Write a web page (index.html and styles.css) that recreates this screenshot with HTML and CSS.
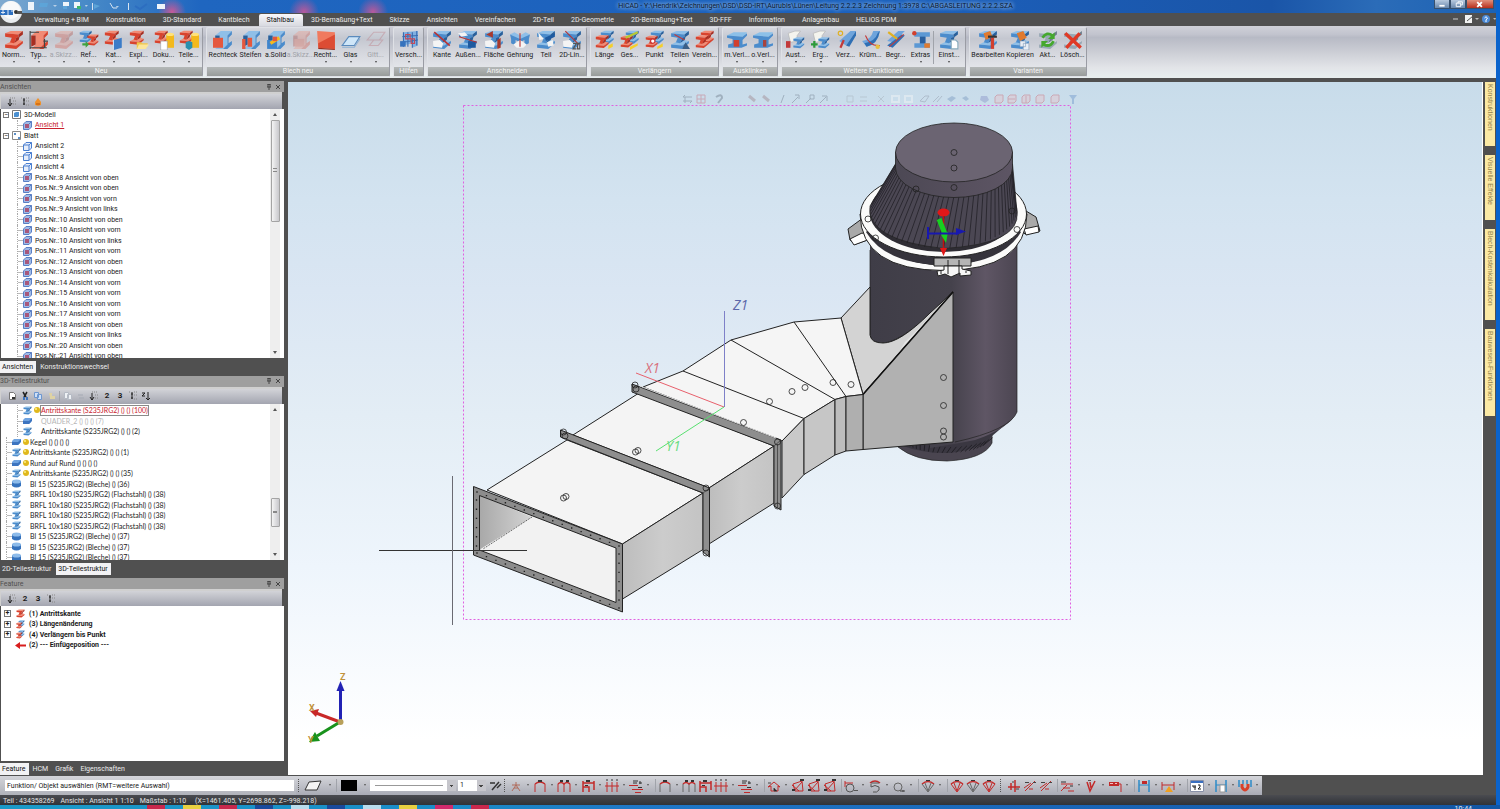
FILE: index.html
```html
<!DOCTYPE html>
<html lang="de">
<head>
    <meta charset="UTF-8">
    <meta name="viewport" content="width=device-width, initial-scale=1.0">
    <title>HiCAD</title>
    <link rel="stylesheet" href="styles.css">
</head>
<body>

<!-- shared icon shapes -->
<svg class="defs" width="0" height="0" aria-hidden="true">
    <symbol id="beam" viewBox="0 0 18 18">
        <path fill="var(--a)" d="M1 3 6 1H17L13 4z"/>
        <path fill="var(--b)" d="M1 3 13 4V7L11 7 9 13 5 12 7 7 1 6z"/>
        <path fill="var(--c)" d="M13 4 17 1V4L13 7zM11 7 14 6 13 10 9 13z"/>
        <path fill="var(--a)" d="M1 13 5 11 9 12 13 9 17 10 11 14z"/>
        <path fill="var(--b)" d="M1 13 11 14V17L1 16zM11 14 17 10V12L11 17z"/>
    </symbol>
    <symbol id="sheet" viewBox="0 0 18 18">
        <path fill="var(--a)" d="M2 5 7 1H17L13 5V13L9 17H2L6 13V5z"/>
        <path fill="var(--b)" d="M13 5 17 1V4L14 7V12L17 10V13L13 17H9L13 13z"/>
        <path fill="var(--c)" d="M2 5H6V13L2 15z"/>
    </symbol>
    <symbol id="cube" viewBox="0 0 9 9">
        <path fill="#e6eefb" stroke="#4a7fd0" d="M.5 3 3 .5H8.500V6L6 8.500H.5zM.5 3H6V8.500M6 3 8.500.5"/>
    </symbol>
    <symbol id="cubered" viewBox="0 0 9 9">
        <path fill="#9fbbe8" stroke="#5a7fc4" d="M.5 3 3 .5H8.500V6L6 8.500H.5zM6 3 8.500.5"/>
        <path fill="#a8587c" d="M2 3h4v4H2z"/>
    </symbol>
    <symbol id="plate" viewBox="0 0 9 9">
        <path fill="#6fa3e0" d="M0 4 2 2h7L8 6 6 8H0z"/><path fill="#3c74c0" d="M0 5h6l3-3v3L6 8H0z"/>
    </symbol>
    <symbol id="disc" viewBox="0 0 9 9">
        <path fill="#3572bd" d="M0 2h9v5Q4.500 10 0 7z"/><ellipse fill="#8dbbea" cx="4.500" cy="2.500" rx="4.500" ry="2"/>
    </symbol>
    <symbol id="ball" viewBox="0 0 6 6"><circle fill="#e0b81c" cx="3" cy="3" r="3"/><circle fill="#fff08a" cx="2" cy="2" r="1"/></symbol>
    <symbol id="tree-a" viewBox="0 0 10 10"><path stroke="#222" fill="none" d="M3 2V9M1 6 3 9 5 6"/><path stroke="#888" stroke-dasharray="1 1" fill="none" d="M3 1H9M6 4H9M6 7H9"/></symbol>
    <symbol id="tree-b" viewBox="0 0 10 10"><path stroke="#222" fill="none" d="M4 1V8M3 3H5M3 7H5"/><path stroke="#888" stroke-dasharray="1 1" fill="none" d="M1 1H3M6 1H9M6 4H9M6 8H9"/></symbol>
    <symbol id="pin" viewBox="0 0 6 6"><path stroke="#444" fill="none" d="M2 0V3M4 0V3M1 3H5M3 3V6M1.500.5H4.500"/></symbol>
    <symbol id="close" viewBox="0 0 6 6"><path stroke="#444" fill="none" d="M1 1 5 5M5 1 1 5"/></symbol>
    <!-- dimension tools -->
    <symbol id="d-arch" viewBox="0 0 14 14"><path stroke="var(--d)" fill="none" d="M2 13V5M12 13V5"/><path stroke="#c22a2a" fill="none" stroke-width="1.500" d="M2 5Q7 1 12 5"/><path fill="#333" d="M5 1h4v2H5z"/></symbol>
    <symbol id="d-comb" viewBox="0 0 14 14"><path stroke="var(--d)" fill="none" d="M1 13V5M13 5V13M7 4V13"/><path stroke="#c22a2a" fill="none" stroke-width="1.500" d="M1 5Q4 2 7 5Q10 2 13 5"/><path fill="#333" d="M3 1h3v2H3zM9 1h3v2H9z"/></symbol>
    <symbol id="d-step" viewBox="0 0 14 14"><path stroke="#c22a2a" fill="none" stroke-width="1.500" d="M2 13V2M13 11V2M2 4H13M2 8H8V13"/><path fill="#333" d="M5 1h4v2H5zM4 6h3v1H4z"/></symbol>
    <symbol id="d-chain" viewBox="0 0 14 14"><path stroke="#c22a2a" fill="none" d="M2 3V13M7 3V13M12 3V13M0 7H14"/><path stroke="#333" d="M2 0V2M7 0V2M12 0V2"/></symbol>
    <symbol id="d-flow" viewBox="0 0 14 14"><path stroke="#c22a2a" fill="none" d="M0 6.500H9M3 10.500H14M6 13.500H12"/><path stroke="#333" fill="none" d="M4 2H9M11 2V5M10 4h3M9 8.500h4M4 4H8"/></symbol>
    <symbol id="d-house" viewBox="0 0 14 14"><path stroke="#c22a2a" fill="none" d="M4 12V7L1 8 7 3 13 8 11 7V12z"/><path stroke="#444" d="M1 4H4M7 9V12H10"/></symbol>
    <symbol id="d-tri" viewBox="0 0 14 14"><path stroke="#c22a2a" fill="none" d="M2 5 11 2 12 12H4zM3 12 11 3M1 6 8 12"/><path fill="#333" d="M9 0h4v2H9zM1 10h3v2H1z"/></symbol>
    <symbol id="d-circ" viewBox="0 0 14 14"><circle cx="6" cy="9" r="4" stroke="#555" fill="none"/><path stroke="#c22a2a" fill="none" d="M1 4H9M1 2V8"/><path fill="#555" d="M10 11h4v1h-4z"/></symbol>
    <symbol id="d-rad" viewBox="0 0 14 14"><circle cx="6" cy="8" r="4" stroke="#666" fill="none"/><path stroke="#444" fill="none" d="M8 12H13M11 11V13"/></symbol>
    <symbol id="d-bow" viewBox="0 0 14 14"><path stroke="#c22a2a" fill="none" stroke-width="1.500" d="M2 4Q7 0 12 4"/><path stroke="#555" fill="none" d="M3 5V8Q7 5 11 8V11Q9 14 5 13M3 4H11"/></symbol>
    <symbol id="d-fan" viewBox="0 0 14 14"><path stroke="#c22a2a" fill="none" stroke-width="1.500" d="M1 5Q7 0 13 5"/><path stroke="var(--d)" fill="none" d="M1 5 7 13 13 5M4 4 7 12 10 4"/><path fill="#333" d="M5 1h4v1H5z"/></symbol>
    <symbol id="d-cross" viewBox="0 0 14 14"><path stroke="#c22a2a" fill="none" stroke-width="1.500" d="M8 1V13M1 8H13M4 4V11"/><path stroke="#444" d="M5 3H7M9 10h3"/></symbol>
    <symbol id="d-slash" viewBox="0 0 14 14"><path stroke="#c22a2a" fill="none" d="M2 12 12 2M1 9 8 4M6 10H10"/><path fill="#444" d="M2 3h4v1H2zM10 3h3v1h-3z"/></symbol>
    <symbol id="d-level" viewBox="0 0 14 14"><path stroke="#c22a2a" fill="none" d="M1 5H13M3 9H10M1 12 7 6M8 12H14"/><path stroke="#333" d="M1 3H6M10 7H13"/></symbol>
    <symbol id="d-weld" viewBox="0 0 14 14"><path stroke="#c22a2a" fill="none" stroke-width="1.500" d="M3 3 6 12 11 2M6 3 7 9"/><path fill="#555" d="M4 1h3v1H4z"/></symbol>
    <symbol id="d-flag" viewBox="0 0 14 14"><path fill="#c22a2a" d="M1 3h10v4H1z"/><path fill="#f0c0c0" d="M2 4h3v1H2zM7 4h2v1H7z"/><path stroke="#c22a2a" fill="none" d="M11 5H13V13"/></symbol>
    <symbol id="d-span" viewBox="0 0 14 14"><path stroke="#2d8ac8" fill="none" stroke-width="1.500" d="M2 1V13M12 1V13"/><path stroke="#2d8ac8" d="M2 6H12"/></symbol>
</svg>

<div class="window">
    <header class="titlebar">
        <button class="logo" aria-label="Menü">
            <svg viewBox="0 0 22 22"><circle cx="11" cy="11" r="11" fill="#e9ecef"/><circle cx="11" cy="9" r="9" fill="#f8f9fa"/><path fill="#2c6fc0" d="M0 9h13v5H0z"/><path stroke="#dfe9f5" d="M3 9v4M1 11.500h4M8 9v5M11 10h2"/><circle cx="16" cy="11" r="2" fill="#333"/><path fill="#555" d="M17 10h5v3h-5z"/></svg>
        </button>
        <div class="quick">
            <svg viewBox="0 0 170 12"><path fill="#eef4fa" d="M1 2h6v8H1zM36 2h6v4h-6zM47 2h6v6h-6zM130 4h8v5h-8z"/><path fill="#5da4d8" d="M13 3h8l-1 4h-8zM36 6h4v3h-4zM67 4l6 2-6 3z"/><path fill="#b7cfe6" d="M26 5h4l-2 2zM58 5h3l-2 2zM89 6h3l-2 2z"/><path stroke="#d7e4f1" fill="none" d="M65.500 3V10M83 3 86 8H90M101.500 3V10"/><path stroke="#2d6ec0" fill="none" stroke-width="2" d="M108 6 113 9 120 4"/><path fill="#3fb56a" d="M50 6h4v3h-4z"/></svg>
        </div>
        <h1 class="title">HiCAD - Y:\Hendrik\Zeichnungen\DSD\DSD-IRT\Aurubis\Lünen\Leitung 2.2.2.3 Zeichnung 1:3978 C:\ABGASLEITUNG 2.2.2.SZA</h1>
        <div class="winbtns">
            <button aria-label="Minimieren"><svg viewBox="0 0 16 8"><path fill="#fff" d="M5 5h6v2H5z"/></svg></button>
            <button aria-label="Wiederherstellen"><svg viewBox="0 0 16 8"><path stroke="#fff" fill="none" d="M6 3h5v4H6zM8 3V1.500h5V5H11"/></svg></button>
            <button class="x" aria-label="Schließen"><svg viewBox="0 0 28 8"><path stroke="#fff" stroke-width="2" d="M11 2 16 7M16 2 11 7"/></svg></button>
        </div>
    </header>

    <nav class="tabs">
        <button>Verwaltung + BIM</button>
        <button>Konstruktion</button>
        <button>3D-Standard</button>
        <button>Kantblech</button>
        <button class="active">Stahlbau</button>
        <button>3D-Bemaßung+Text</button>
        <button>Skizze</button>
        <button>Ansichten</button>
        <button>Vereinfachen</button>
        <button>2D-Teil</button>
        <button>2D-Geometrie</button>
        <button>2D-Bemaßung+Text</button>
        <button>3D-FFF</button>
        <button>Information</button>
        <button>Anlagenbau</button>
        <button>HELiOS PDM</button>
        <svg class="tabhelp" viewBox="0 0 44 10"><path stroke="#ccc" d="M1 5H6"/><path fill="#f2f2f2" d="M13 1h7v8h-7z"/><path stroke="#555" fill="none" d="M15 7 21 2"/><path fill="#bbb" d="M23 4h4l-2 2zM41 4h3l-1 2z"/><circle cx="34" cy="5" r="4" fill="#4a8ad8"/><path stroke="#fff" fill="none" d="M32.500 4Q34 1.500 35.500 4L34 6V8"/></svg>
    </nav>

    <div class="ribbon">
        <section class="group">
            <div class="items">
                <button class="drop"><svg class="red" viewBox="0 0 18 18"><use href="#beam"/></svg>Norm...</button>
                <button class="drop"><svg class="red" viewBox="0 0 18 18"><use href="#sheet"/><path stroke="#444" fill="none" d="M1 2H9M1 1V17M1 16H16M13 10h4M14 8v8"/></svg>Typ...</button>
                <button class="drop off"><svg class="red" viewBox="0 0 18 18"><use href="#beam"/></svg>a.Skizz...</button>
                <button class="drop"><svg viewBox="0 0 18 18"><use class="blue" href="#beam" width="12" height="12"/><use class="red" href="#beam" x="7" y="3" width="11" height="12"/><path fill="#3fa23f" d="M3 12h3v-2l3 3-3 3v-2H3z"/></svg>Ref...</button>
                <button class="drop"><svg viewBox="0 0 18 18"><use class="red" href="#beam" width="14" height="14"/><path fill="#3b7cc8" d="M9 9l7-2v9l-7 2z"/><path fill="#cfe0f4" d="M8 9h1v8H8z"/></svg>Kat...</button>
                <button class="drop"><svg viewBox="0 0 18 18"><use class="red" href="#beam" width="14" height="14"/><path fill="#f0c64a" d="M7 11h4l1 1h5l-2 5H7z"/><path fill="#fbe69b" d="M9 13h9l-3 4H7z"/></svg>Expl...</button>
                <button class="drop"><svg viewBox="0 0 18 18"><use class="red" href="#beam" width="13" height="13"/><path fill="#f3b91d" d="M11 4h7v12h-7z"/><ellipse cx="14.500" cy="4" rx="3.500" ry="1.500" fill="#ffe27a"/><path fill="#fff" stroke="#999" stroke-width=".5" d="M6 10h6v8H6z"/></svg>Doku...</button>
                <button class="drop"><svg viewBox="0 0 18 18"><use class="red" href="#beam" width="13" height="13"/><path fill="#f3b91d" d="M11 4h7v12h-7z"/><ellipse cx="14.500" cy="4" rx="3.500" ry="1.500" fill="#ffe27a"/><path fill="#2a8fae" d="M6 11l3-1 3 1v5l-3 2-3-2z"/></svg>Teile...</button>
            </div>
            <h2>Neu</h2>
        </section>
        <section class="group">
            <div class="items">
                <button class="w30"><svg class="blue" viewBox="0 0 18 18"><use href="#sheet"/><path fill="#e4583e" d="M0 7h9v9H0z"/></svg>Rechteck</button>
                <button><svg class="blue" viewBox="0 0 18 18"><use href="#sheet"/><path fill="#e4583e" d="M1 8h3v9H1zM6 7h4v8H6z"/></svg>Steifen</button>
                <button><svg class="blue" viewBox="0 0 18 18"><use href="#sheet"/><path fill="#3f84cc" d="M1 9h9v8H1z"/><path stroke="#f5b91e" stroke-width="3" d="M4 12 12 7"/><path fill="#e4583e" d="M6 6h4v4H6z"/></svg>a.Solid</button>
                <button class="off"><svg class="red" viewBox="0 0 18 18"><use href="#sheet"/><path fill="#e4583e" d="M3 8h9v7H3z"/></svg>a.Skizz...</button>
                <button class="drop"><svg viewBox="0 0 18 18"><path fill="#f07a5e" d="M1 1 17 2V17L2 16z"/><path fill="#dc4c34" d="M2 12 17 4V17L2 16z"/><path fill="#9a3020" d="M2 16l15 1v1L2 17z"/></svg>Recht...</button>
                <button class="drop"><svg viewBox="0 0 18 18"><path fill="#cfe6f8" stroke="#5b8bbd" d="M1 14 7 6H17L12 14z"/><path stroke="#8fb2d4" fill="none" d="M1 15.500H12L17 8"/></svg>Glas</button>
                <button class="drop off"><svg viewBox="0 0 18 18"><path fill="none" stroke="#b8606a" d="M1 9 7 2H17L12 9zM3 14 7 9H15L11 14z"/></svg>Gitt...</button>
            </div>
            <h2>Blech neu</h2>
        </section>
        <section class="group">
            <div class="items">
                <button class="drop w27"><svg viewBox="0 0 18 18"><path fill="#7fb0e2" d="M4 2 17 1V14L12 16V12L4 14z"/><path stroke="#3a6cb0" fill="none" d="M4 2V15M8 2V15M12 2V16M16 1V14M3 6 17 5M3 11 17 9"/><path stroke="#c24a5a" fill="none" d="M6 4h4v4H6zM11 8h3v4h-3z"/><path fill="#3572bd" d="M1 10h5v5H1z"/></svg>Versch...</button>
            </div>
            <h2>Hilfen</h2>
        </section>
        <section class="group">
            <div class="items">
                <button class="w26"><svg class="blue" viewBox="0 0 18 18"><use href="#beam"/><path fill="#f4f4f4" d="M1 10l6-1 3 3-1 4-8-1z"/><path stroke="#b83232" stroke-width="1.500" d="M2 2 16 14"/></svg>Kante</button>
                <button class="w26"><svg class="blue" viewBox="0 0 18 18"><use href="#beam"/><path fill="#f4f4f4" d="M0 3l6-1 3 3-6 1z"/><path fill="#1e5aa0" d="M9 10h7v6H9z"/><path stroke="#b83232" d="M1 6 17 11"/></svg>Außen...</button>
                <button class="w26"><svg class="blue" viewBox="0 0 18 18"><use href="#beam"/><path fill="#f4f4f4" d="M1 10l6-1 3 3-1 4-8-1z"/><path fill="#a83a2e" d="M2 4 8 1V7zM12 9l3-2v9l-3 1z"/></svg>Fläche</button>
                <button class="w26"><svg class="blue" viewBox="0 0 18 18"><path fill="#8fbfe8" d="M0 4 4 2 9 5 14 2 18 4 9 9z"/><path fill="#4b8ccc" d="M0 4 9 8V11L5 9V14L1 12V8zM18 4 9 8V11L13 9V14L17 12V8z"/><path fill="#f4f4f4" d="M3 13 9 9 15 13 12 16H6z"/><path stroke="#b83232" d="M9 3V15"/></svg>Gehrung</button>
                <button class="w26"><svg class="blue" viewBox="0 0 18 18"><use href="#beam"/><path fill="#f4f4f4" d="M2 2l5 6-4 1zM10 11l5-2 1 5-5 1z"/><path fill="#1e5aa0" d="M8 7l9-4v3l-8 4z"/></svg>Teil</button>
                <button class="w26"><svg class="blue" viewBox="0 0 18 18"><use href="#beam"/><path fill="#f4f4f4" d="M1 10l6-1 3 3-1 4-8-1z"/><path stroke="#b83232" d="M3 1 15 13"/><path stroke="#555" fill="none" d="M10 12h3l-3 5h3M14 12v5h2v-5z"/></svg>2D-Lin...</button>
            </div>
            <h2>Anschneiden</h2>
        </section>
        <section class="group">
            <div class="items">
                <button><svg viewBox="0 0 18 18"><use class="blue" href="#beam" x="4" width="14" height="13"/><use class="red" href="#beam" y="4" width="13" height="13"/><path fill="#f5cf2a" d="M12 14l4-2v3l-4 2z"/></svg>Länge</button>
                <button><svg viewBox="0 0 18 18"><use class="blue" href="#beam" x="4" width="14" height="13"/><use class="red" href="#beam" y="4" width="12" height="13"/><path stroke="#b8c832" stroke-width="2" d="M5 7 16 2"/><path fill="#f5cf2a" d="M9 15l7-3v2l-7 4z"/></svg>Ges...</button>
                <button><svg viewBox="0 0 18 18"><use class="blue" href="#beam" x="4" width="14" height="13"/><use class="red" href="#beam" y="4" width="12" height="13"/><circle cx="7" cy="10" r="2" fill="#fff" stroke="#c33"/><path fill="#f5cf2a" d="M11 15l5-3v3l-5 2z"/></svg>Punkt</button>
                <button class="drop"><svg class="blue" viewBox="0 0 18 18"><use href="#beam"/><path stroke="#c23a3a" d="M4 4 13 9"/><path fill="#3c5f86" d="M11 17l3-6 4 6z"/></svg>Teilen</button>
                <button><svg class="red" viewBox="0 0 18 18"><use href="#beam" x="4" width="14" height="13"/><use href="#beam" y="4" width="13" height="13"/></svg>Verein...</button>
            </div>
            <h2>Verlängern</h2>
        </section>
        <section class="group">
            <div class="items">
                <button class="drop w26"><svg class="blue" viewBox="0 0 18 18"><path fill="#8cc0e8" d="M0 5 6 2h12l-3 4 H4z"/><path fill="#4b8ccc" d="M0 5 14 6 18 3V5L14 9V13L18 12V14L13 16H1V13L5 12V8L0 7z"/><path fill="#d2402e" d="M6 9h5v6H6z"/></svg>m.Verl...</button>
                <button class="drop w26"><svg class="blue" viewBox="0 0 18 18"><path fill="#8cc0e8" d="M0 5 6 2h12l-3 4 H4z"/><path fill="#4b8ccc" d="M0 5 14 6 18 3V5L14 9V13L18 12V14L13 16H1V13L5 12V8L0 7z"/><path fill="#a8443e" d="M9 9h3v6H9z"/></svg>o.Verl...</button>
            </div>
            <h2>Ausklinken</h2>
        </section>
        <section class="group">
            <div class="items">
                <button class="drop"><svg class="blue" viewBox="0 0 18 18"><path fill="#f4f4ee" stroke="#aaa" stroke-width=".5" d="M2 3 8 1h5l-3 4v5l-6 1z"/><use href="#beam" x="5" y="6" width="13" height="11"/><path fill="#c23a3a" d="M0 10h4v6H0z"/></svg>Aust...</button>
                <button class="drop"><svg class="blue" viewBox="0 0 18 18"><path fill="#f4f4ee" stroke="#aaa" stroke-width=".5" d="M2 3 8 1h5l-3 4v5l-6 1z"/><use href="#beam" x="5" y="6" width="13" height="11"/><path stroke="#2c9a3a" stroke-width="2" d="M0 13h6M3 10v6"/></svg>Erg...</button>
                <button><svg class="blue" viewBox="0 0 18 18"><path fill="#6ea4dc" d="M3 10 13 1h5L9 14z"/><path fill="#2f6fb4" d="M9 14 18 1V5L12 15z"/><circle cx="4" cy="3" r="2" fill="none" stroke="#e0b020"/><path stroke="#c23a3a" stroke-width="2" fill="none" d="M4 16 7 9"/></svg>Verz...</button>
                <button><svg class="blue" viewBox="0 0 18 18"><path fill="#6ea4dc" d="M1 10Q9 9 11 1h6Q15 13 5 15z"/><path fill="#2f6fb4" d="M3 12Q13 10 15 3l2-2Q15 13 5 15z"/><path stroke="#c23a3a" fill="none" d="M4 5Q8 15 17 14"/><circle cx="15" cy="15" r="2" fill="#e8c040"/></svg>Krüm...</button>
                <button><svg class="blue" viewBox="0 0 18 18"><path fill="#6ea4dc" d="M1 10 11 1h6L7 11z"/><path fill="#2f6fb4" d="M1 14 14 4 17 5 6 16z"/><path stroke="#e0b020" stroke-width="2" d="M2 2 10 8"/><path stroke="#c23a3a" fill="none" d="M3 15 16 4"/></svg>Begr...</button>
                <button class="drop"><svg viewBox="0 0 18 18"><path fill="#5c98d4" d="M3 2h14v4H13v6h4v4H3v-4h5V6H3z"/><path fill="#2a5f9e" d="M8 6h5v6H8z"/><circle cx="3" cy="3" r="2" fill="#d2402e"/><path fill="#e07a2e" d="M12 12h5v4h-5z"/></svg>Extras</button>
                <span class="vsep"></span>
                <button class="drop w30"><svg class="blue" viewBox="0 0 18 18"><use href="#beam"/><path fill="#fff" stroke="#8ab" d="M11 9h4l2 2v6h-6z"/></svg>Einst...</button>
            </div>
            <h2>Weitere Funktionen</h2>
        </section>
        <section class="group">
            <div class="items">
                <button class="w34"><svg class="blue" viewBox="0 0 18 18"><use href="#beam"/><path fill="#e07a2e" d="M5 3l6-2 2 5-6 3z"/><path stroke="#333" stroke-width="2" d="M9 6H17"/><path stroke="#d2402e" stroke-width="3" d="M13 7V17"/></svg>Bearbeiten</button>
                <button class="w30"><svg class="blue" viewBox="0 0 18 18"><use href="#beam"/><path fill="#e07a2e" d="M6 3l6-2 3 6-6 3z"/><path fill="#e8eef6" stroke="#7a94b4" stroke-width=".5" d="M9 10h5v5H9zM12 12h5v6h-5z"/></svg>Kopieren</button>
                <button><svg viewBox="0 0 18 18"><use class="grey" href="#beam"/><path fill="none" stroke="#45a82e" stroke-width="2.500" d="M4 7Q8 1 13 5M14 10Q11 16 5 13"/><path fill="#45a82e" d="M15 2v6h-6zM3 16v-6h6z"/></svg>Akt...</button>
                <button><svg viewBox="0 0 18 18"><use class="grey" href="#beam"/><path stroke="#e03a26" stroke-width="3" d="M2 3 16 16M15 3 3 16"/></svg>Lösch...</button>
            </div>
            <h2>Varianten</h2>
        </section>
    </div>

    <main class="work">
        <aside class="side">
            <section class="panel views">
                <h3>Ansichten <svg viewBox="0 0 6 6"><use href="#pin"/></svg><svg viewBox="0 0 6 6"><use href="#close"/></svg></h3>
                <div class="minibar">
                    <button aria-label="Aufklappen"><svg viewBox="0 0 10 10"><use href="#tree-a"/></svg></button>
                    <button aria-label="Zuklappen"><svg viewBox="0 0 10 10"><use href="#tree-b"/></svg></button>
                    <button aria-label="Aktualisieren"><svg viewBox="0 0 10 10"><path fill="#f0912a" d="M5 1 8 5V8L5 9 2 8V5z"/><path fill="#d4721a" d="M3 6h4v2H3z"/></svg></button>
                </div>
                <div class="body">
                    <ul class="tree">
                        <li><button class="exp" aria-label="Zuklappen">−</button><svg viewBox="0 0 9 9"><path fill="#fff" stroke="#777" d="M.5.5h8v8h-8z"/><path fill="#4a8fd0" d="M2 3l2-1h3v4L6 7H2z"/></svg>3D-Modell</li>
                        <li class="sub"><svg viewBox="0 0 9 9"><use href="#cubered"/></svg><a href="#ansicht1">Ansicht 1</a></li>
                        <li><button class="exp" aria-label="Zuklappen">−</button><svg viewBox="0 0 9 9"><path fill="#fff" stroke="#888" d="M.5.5h8v8h-8z"/><path fill="#5a8fc8" d="M2 2h2v2H2zM6 6h2v2H6z"/></svg>Blatt</li>
                        <li class="sub"><svg viewBox="0 0 9 9"><use href="#cube"/></svg>Ansicht 2</li>
                        <li class="sub"><svg viewBox="0 0 9 9"><use href="#cube"/></svg>Ansicht 3</li>
                        <li class="sub"><svg viewBox="0 0 9 9"><use href="#cube"/></svg>Ansicht 4</li>
                        <li class="sub"><svg viewBox="0 0 9 9"><use href="#cubered"/></svg>Pos.Nr.:8 Ansicht von oben</li>
                        <li class="sub"><svg viewBox="0 0 9 9"><use href="#cubered"/></svg>Pos.Nr.:9 Ansicht von oben</li>
                        <li class="sub"><svg viewBox="0 0 9 9"><use href="#cubered"/></svg>Pos.Nr.:9 Ansicht von vorn</li>
                        <li class="sub"><svg viewBox="0 0 9 9"><use href="#cubered"/></svg>Pos.Nr.:9 Ansicht von links</li>
                        <li class="sub"><svg viewBox="0 0 9 9"><use href="#cubered"/></svg>Pos.Nr.:10 Ansicht von oben</li>
                        <li class="sub"><svg viewBox="0 0 9 9"><use href="#cubered"/></svg>Pos.Nr.:10 Ansicht von vorn</li>
                        <li class="sub"><svg viewBox="0 0 9 9"><use href="#cubered"/></svg>Pos.Nr.:10 Ansicht von links</li>
                        <li class="sub"><svg viewBox="0 0 9 9"><use href="#cubered"/></svg>Pos.Nr.:11 Ansicht von vorn</li>
                        <li class="sub"><svg viewBox="0 0 9 9"><use href="#cubered"/></svg>Pos.Nr.:12 Ansicht von oben</li>
                        <li class="sub"><svg viewBox="0 0 9 9"><use href="#cubered"/></svg>Pos.Nr.:13 Ansicht von oben</li>
                        <li class="sub"><svg viewBox="0 0 9 9"><use href="#cubered"/></svg>Pos.Nr.:14 Ansicht von vorn</li>
                        <li class="sub"><svg viewBox="0 0 9 9"><use href="#cubered"/></svg>Pos.Nr.:15 Ansicht von vorn</li>
                        <li class="sub"><svg viewBox="0 0 9 9"><use href="#cubered"/></svg>Pos.Nr.:16 Ansicht von vorn</li>
                        <li class="sub"><svg viewBox="0 0 9 9"><use href="#cubered"/></svg>Pos.Nr.:17 Ansicht von vorn</li>
                        <li class="sub"><svg viewBox="0 0 9 9"><use href="#cubered"/></svg>Pos.Nr.:18 Ansicht von oben</li>
                        <li class="sub"><svg viewBox="0 0 9 9"><use href="#cubered"/></svg>Pos.Nr.:19 Ansicht von links</li>
                        <li class="sub"><svg viewBox="0 0 9 9"><use href="#cubered"/></svg>Pos.Nr.:20 Ansicht von oben</li>
                        <li class="sub"><svg viewBox="0 0 9 9"><use href="#cubered"/></svg>Pos.Nr.:21 Ansicht von oben</li>
                    </ul>
                    <div class="scroll"><i class="up"></i><div class="track"><b class="thumb"></b></div><i class="down"></i></div>
                </div>
                <div class="ptabs"><button class="active">Ansichten</button><button>Konstruktionswechsel</button></div>
            </section>

            <section class="panel parts">
                <h3>3D-Teilestruktur <svg viewBox="0 0 6 6"><use href="#pin"/></svg><svg viewBox="0 0 6 6"><use href="#close"/></svg></h3>
                <div class="minibar">
                    <button aria-label="Neu"><svg viewBox="0 0 10 10"><path fill="#fff" stroke="#777" d="M2.500 1.500h4l2 2v5h-6z"/><path fill="#333" d="M5 6h3v2H5z"/></svg></button>
                    <button aria-label="Ausschneiden"><svg viewBox="0 0 10 10"><path stroke="#222" stroke-width="1.500" d="M3 1 6 6M7 1 4 6"/><path fill="#3d74c0" d="M3 6h2v3H3zM6 6h2v3H6z"/></svg></button>
                    <button aria-label="Kopieren"><svg viewBox="0 0 10 10"><path fill="#cfe0f6" stroke="#6d97d0" d="M1.500 1.500h4v5h-4zM4.500 3.500h4v5h-4z"/></svg></button>
                    <button aria-label="Einfügen"><svg viewBox="0 0 10 10"><path fill="#ded2a4" d="M3 2h3v3h3v3H4V6z"/></svg></button>
                    <span class="vsep"></span>
                    <button aria-label="Duplizieren"><svg viewBox="0 0 10 10"><path fill="#eef1f5" stroke="#b5bac4" d="M1.500 1.500h4v6h-4zM4.500 3.500h4v5h-4z"/></svg></button>
                    <button aria-label="Ersetzen"><svg viewBox="0 0 10 10"><path stroke="#a5aab4" d="M2 4H7M3 7H8"/></svg></button>
                    <button aria-label="Aufklappen"><svg viewBox="0 0 10 10"><use href="#tree-a"/></svg></button>
                    <button class="num">2</button>
                    <button class="num">3</button>
                    <button aria-label="Zuklappen"><svg viewBox="0 0 10 10"><use href="#tree-b"/></svg></button>
                    <button aria-label="Sortieren"><svg viewBox="0 0 10 10"><path stroke="#222" fill="none" d="M1 2H4L1 5H4M7 1V9M5 7 7 9 9 7"/></svg></button>
                </div>
                <div class="body">
                    <ul class="tree">
                        <li class="sub"><svg class="blue" viewBox="0 0 18 18"><use href="#beam"/></svg><svg class="dot" viewBox="0 0 6 6"><use href="#ball"/></svg><span class="picked">Antrittskante (S235JRG2) () () (100)</span></li>
                        <li class="sub dim"><svg viewBox="0 0 9 9"><use href="#plate"/></svg><i class="dot"></i>QUADER_2 () () () (7)</li>
                        <li class="sub"><svg class="blue" viewBox="0 0 18 18"><use href="#beam"/></svg><i class="dot"></i>Antrittskante (S235JRG2) () () (2)</li>
                        <li class="top"><svg viewBox="0 0 9 9"><use href="#plate"/></svg><svg class="dot" viewBox="0 0 6 6"><use href="#ball"/></svg>Kegel () () () ()</li>
                        <li class="top"><svg class="blue" viewBox="0 0 18 18"><use href="#beam"/></svg><svg class="dot" viewBox="0 0 6 6"><use href="#ball"/></svg>Antrittskante (S235JRG2) () () (1)</li>
                        <li class="top"><svg viewBox="0 0 9 9"><use href="#plate"/></svg><svg class="dot" viewBox="0 0 6 6"><use href="#ball"/></svg>Rund auf Rund () () () ()</li>
                        <li class="top"><svg class="blue" viewBox="0 0 18 18"><use href="#beam"/></svg><svg class="dot" viewBox="0 0 6 6"><use href="#ball"/></svg>Antrittskante (S235JRG2) () () (35)</li>
                        <li class="top"><svg viewBox="0 0 9 9"><use href="#disc"/></svg><i class="dot"></i>Bl 15 (S235JRG2) (Bleche) () (36)</li>
                        <li class="top"><svg class="blue" viewBox="0 0 18 18"><use href="#beam"/></svg><i class="dot"></i>BRFL 10x180 (S235JRG2) (Flachstahl) () (38)</li>
                        <li class="top"><svg class="blue" viewBox="0 0 18 18"><use href="#beam"/></svg><i class="dot"></i>BRFL 10x180 (S235JRG2) (Flachstahl) () (38)</li>
                        <li class="top"><svg class="blue" viewBox="0 0 18 18"><use href="#beam"/></svg><i class="dot"></i>BRFL 10x180 (S235JRG2) (Flachstahl) () (38)</li>
                        <li class="top"><svg class="blue" viewBox="0 0 18 18"><use href="#beam"/></svg><i class="dot"></i>BRFL 10x180 (S235JRG2) (Flachstahl) () (38)</li>
                        <li class="top"><svg viewBox="0 0 9 9"><use href="#disc"/></svg><i class="dot"></i>Bl 15 (S235JRG2) (Bleche) () (37)</li>
                        <li class="top"><svg viewBox="0 0 9 9"><use href="#disc"/></svg><i class="dot"></i>Bl 15 (S235JRG2) (Bleche) () (37)</li>
                        <li class="top"><svg viewBox="0 0 9 9"><use href="#disc"/></svg><i class="dot"></i>Bl 15 (S235JRG2) (Bleche) () (37)</li>
                    </ul>
                    <div class="scroll"><i class="up"></i><div class="track"><b class="thumb"></b></div><i class="down"></i></div>
                </div>
                <div class="ptabs"><button>2D-Teilestruktur</button><button class="active">3D-Teilestruktur</button></div>
            </section>

            <section class="panel features">
                <h3>Feature <svg viewBox="0 0 6 6"><use href="#pin"/></svg><svg viewBox="0 0 6 6"><use href="#close"/></svg></h3>
                <div class="minibar">
                    <button aria-label="Aufklappen"><svg viewBox="0 0 10 10"><use href="#tree-a"/></svg></button>
                    <button class="num">2</button>
                    <button class="num">3</button>
                    <button aria-label="Zuklappen"><svg viewBox="0 0 10 10"><use href="#tree-b"/></svg></button>
                </div>
                <div class="body">
                    <ul class="tree bold">
                        <li><button class="exp" aria-label="Aufklappen">+</button><svg class="red" viewBox="0 0 18 18"><use href="#beam"/></svg>(1) Antrittskante</li>
                        <li><button class="exp" aria-label="Aufklappen">+</button><svg viewBox="0 0 18 18"><use class="blue" href="#beam" x="4" width="14" height="13"/><use class="red" href="#beam" y="4" width="13" height="14"/></svg>(3) Längenänderung</li>
                        <li><button class="exp" aria-label="Aufklappen">+</button><svg viewBox="0 0 18 18"><use class="blue" href="#beam" x="4" width="14" height="13"/><use class="red" href="#beam" y="4" width="13" height="14"/></svg>(4) Verlängern bis Punkt</li>
                        <li class="here"><svg viewBox="0 0 11 9"><path fill="#d81e1e" d="M0 4.500 5 1V3.500H11V5.500H5V8z"/></svg>(2) --- Einfügeposition ---</li>
                    </ul>
                </div>
                <div class="ptabs"><button class="active">Feature</button><button>HCM</button><button>Grafik</button><button>Eigenschaften</button></div>
            </section>
        </aside>

        <div class="viewport">
            <svg class="model" viewBox="288 82 1180 693" preserveAspectRatio="xMinYMin meet" role="img" aria-label="3D-Modell Abgasleitung">
                <defs>
                    <linearGradient id="tube" x1="870" x2="1018" y1="0" y2="0" gradientUnits="userSpaceOnUse">
                        <stop offset="0" stop-color="#3f3d47"/><stop offset=".55" stop-color="#45424c"/><stop offset=".78" stop-color="#5f5665"/><stop offset="1" stop-color="#4b4551"/>
                    </linearGradient>
                    <linearGradient id="cap" x1="895" x2="1013" y1="0" y2="0" gradientUnits="userSpaceOnUse">
                        <stop offset="0" stop-color="#4c4854"/><stop offset=".6" stop-color="#57505e"/><stop offset="1" stop-color="#5d5564"/>
                    </linearGradient>
                    <linearGradient id="wall" x1="0" x2="1" y1="0" y2="0"><stop offset="0" stop-color="#a8a8a8"/><stop offset="1" stop-color="#d4d4d4"/></linearGradient>
                    <linearGradient id="flank" x1="0" x2="1" y1="0" y2="0"><stop offset="0" stop-color="#bdbdbd"/><stop offset=".5" stop-color="#cccccc"/><stop offset="1" stop-color="#c4c4c4"/></linearGradient>
                </defs>

                <rect class="frame" x="463.500" y="105.500" width="607" height="514"/>

                <!-- lower reducer and tube -->
                <path fill="#4a4550" stroke="#222" stroke-width=".7" d="M898 447Q915 461 947 461Q984 459 992 443V430H898z"/>
                <path fill="#3a3741" d="M903 446Q925 454 950 453Q982 449 992 436L1005 425H903z"/>
                <path id="reducer" stroke="#1c1b20" stroke-width=".8" fill="none"/>
                <path fill="url(#tube)" d="M870 220V335Q871 343 883 343Q905 343 930 320V448Q955 444 975 440Q1010 428 1017 412V220z"/>
                <path stroke="#222" fill="none" stroke-width=".7" d="M870 250V335Q871 343 883 343Q905 342 953 291M1017 235V412Q1010 430 955 442"/>

                <!-- transition piece -->
                <path class="edge" fill="#d3d3d3" d="M841 318 870 287V335Q871 343 883 343Q900 343 930 313L953 292 863 394z"/>
                <path fill="#e6e6e6" d="M905 342Q920 328 938 308L953 292 900 350z"/>
                <path class="edge" fill="#b1b1b1" d="M953 292V442L863 449.500V394.500z"/>
                <path stroke="#111" stroke-width="1.500" d="M863 394.500 953 292"/>
                <path class="edge" fill="#f5f5f5" d="M643 387 683 371 731 340 794 322 841 318 863 394.500 846 396.500 835 399.500 804 418.500 782 441z"/>
                <path class="edge" fill="none" d="M683 371 804 418.500M731 340 835 399.500M794 322 846 396.500"/>
                <path class="edge" fill="#c9c9c9" d="M782 441 804 418.500V474.500L782 498z"/>
                <path class="edge" fill="#c6c6c6" d="M804 418.500 835 399.500V455L804 474.500z"/>
                <path class="edge" fill="#bdbdbd" d="M835 399.500 846 396.500V451L835 455z"/>
                <path class="edge" fill="#afafaf" d="M846 396.500 863 394.500V449.500L846 451z"/>

                <!-- duct sections -->
                <path class="edge" fill="#f4f4f4" d="M639 393 774 446 709 488 573 435z"/>
                <path class="edge" fill="url(#flank)" d="M709 488 774 446V503L709 544z"/>
                <path class="edge" fill="#8e8e8e" d="M632 384 781 440V510L774 506V446L632 392z"/>
                <path stroke="#ddd" stroke-width="1" fill="none" d="M640 386 776 438"/>
                <path stroke="#333" stroke-width=".7" fill="none" d="M774 446 781 440M777.500 444V508"/>
                <path class="edge" fill="#f4f4f4" d="M567 440 703 493 622.500 544 487 490z"/>
                <path class="edge" fill="url(#flank)" d="M622.500 544 703 493V549.500L622.500 599z"/>
                <path class="edge" fill="#8e8e8e" d="M560.500 430 709.500 488V557L703 552V493L560.500 437z"/>
                <path stroke="#333" stroke-width=".7" fill="none" d="M703 493 709.500 488"/>

                <!-- open end with flange -->
                <path fill="#f2f2f2" d="M479 495 616 548V603L479 550z"/>
                <path fill="url(#wall)" d="M479 495 532 517 479 550z"/>
                <path stroke="#444" stroke-dasharray="1 1" d="M532 517 483 549"/>
                <path class="edge" fill="#8c8c8c" fill-rule="evenodd" d="M473.500 486.500 622.500 544V612L473.500 555zM479.500 495.500V550L616 602.500V548z"/>
                <path id="bolts" fill="#222"/>

                <!-- clamp ring -->
                <path class="edge" fill="#a9a9a9" d="M848 229 863 218 873 238 856 244 850 240z"/>
                <path class="edge" fill="#fff" d="M850 239 862 233 873 238 854 245z"/>
                <path class="edge" fill="#a9a9a9" d="M1026 211 1036 217 1040 231 1027 234 1018 232z"/>
                <path class="edge" fill="#fff" d="M1024 229 1038 226 1039 232 1026 235z"/>
                <path class="edge" fill="#fbfbfa" d="M860 214Q861 270 943.500 270.500Q1026 270 1027 214L1017 220Q1005 264 943.500 265Q882 264 870 220z"/>
                <path fill="#35333b" d="M866 232Q885 264 943.500 265Q1002 264 1021 232L1016 228H870z"/>
                <ellipse class="edge" fill="#fbfbfa" cx="943.500" cy="214" rx="83" ry="43"/>
                <ellipse fill="#2f2d34" cx="943.500" cy="212" rx="74" ry="40"/>

                <!-- cone and cap -->
                <path fill="#4b4753" stroke="#222" stroke-width=".7" d="M895.500 164 870 206Q866 240 943.500 248.500Q1021 244 1017 212L1012.500 164z"/>
                <path id="cone" stroke="#1c1b21" stroke-width=".7" fill="none"/>
                <path fill="url(#cap)" stroke="#222" stroke-width=".8" d="M895.500 152V168A58.500 29.500 0 0 0 1012.500 168V152z"/>
                <ellipse fill="#6b6472" stroke="#222" stroke-width=".8" cx="954" cy="152.500" rx="58.500" ry="29.500"/>

                <!-- front clamp -->
                <path class="edge" fill="#b5b5b5" d="M934 258H971V266H934z"/>
                <path class="edge" fill="#f6f6f6" d="M937 271 944 270V266H962V269L971 271V275L960 276V273L951 277 945 274 938 276z"/>
                <path stroke="#222" fill="none" d="M948 260V274M959 260V273M941 271v3M966 271v2"/>

                <!-- drag handle -->
                <ellipse fill="#e01818" cx="943.500" cy="212.500" rx="6" ry="4"/>
                <path stroke="#c01010" stroke-width="1.500" d="M943.500 216V250"/>
                <path fill="#e01818" d="M940 248h7l-3.500 8z"/>
                <path stroke="#18d020" stroke-width="5" d="M939 219 945 234"/><path fill="#18d020" d="M940 233 948 232 946 243z"/>
                <path stroke="#1818b0" stroke-width="2" fill="none" d="M928 233.500H958M928 227V239"/>
                <path fill="#1818b0" d="M956 228 966 231.500 956 235z"/>

                <g class="rings">
                    <circle cx="954" cy="152.500" r="3"/><circle cx="954" cy="168" r="3"/><circle cx="954" cy="187.500" r="3"/>
                    <circle cx="916" cy="189" r="3"/><circle cx="1012" cy="211" r="3"/><circle cx="868" cy="219" r="3"/>
                    <circle cx="875.500" cy="238" r="3"/><circle cx="1017" cy="229.500" r="3"/>
                    <circle cx="943.500" cy="377.500" r="3"/><circle cx="943.500" cy="405.500" r="3"/><circle cx="943.500" cy="431" r="3"/><circle cx="943.500" cy="437" r="3"/>
                    <circle cx="833" cy="382.500" r="3"/><circle cx="851" cy="384.500" r="3"/><circle cx="805" cy="387.500" r="3"/><circle cx="792" cy="391.500" r="3"/>
                    <circle cx="769.500" cy="401.500" r="3"/><circle cx="743.500" cy="422.500" r="3"/>
                    <circle cx="638" cy="450.500" r="3"/><circle cx="635.500" cy="452" r="3"/><circle cx="566" cy="496.500" r="3"/><circle cx="563.500" cy="498" r="3"/>
                    <circle cx="635" cy="385" r="3"/><circle cx="636" cy="389" r="3"/><circle cx="563.500" cy="432" r="3"/><circle cx="565" cy="436" r="3"/>
                    <circle cx="706" cy="488" r="3"/><circle cx="706" cy="553" r="3"/><circle cx="777.500" cy="442" r="3"/><circle cx="777.500" cy="506" r="3"/>
                </g>

                <!-- part axes -->
                <path stroke="#7e80c8" d="M724.500 311V407"/>
                <path stroke="#e8606c" d="M636 373 724 407"/>
                <path stroke="#58e070" d="M656 451 724 407"/>
                <text class="axis" x="645" y="373" fill="#d8707c">X1</text>
                <text class="axis" x="666" y="451" fill="#68dc80">Y1</text>
                <text class="axis" x="733" y="310" fill="#5c66a8">Z1</text>

                <!-- cursor -->
                <path stroke="#333" d="M379 550.500H527"/>
                <path stroke="#6a6a72" d="M452.500 476V625"/>

                <!-- world axes -->
                <path stroke="#2222b4" stroke-width="3" d="M340.500 722V690"/><path fill="#2222b4" d="M336.500 691 340.500 681 344.500 691z"/>
                <path stroke="#c82828" stroke-width="3" d="M340 722 316 713"/><path fill="#c82828" d="M319 709 310 711 316 717z"/>
                <path stroke="#18921c" stroke-width="3" d="M340 722 317 736"/><path fill="#18921c" d="M315 732 309 742 320 741z"/>
                <circle cx="340.500" cy="722" r="3" fill="#b8a05a"/>
                <text class="world" x="340" y="680">Z</text><text class="world" x="309" y="711">X</text><text class="world" x="308" y="743">Y</text>
            </svg>

            <div class="floatbar">
                <svg viewBox="0 0 400 12">
                    <g fill="none" stroke="#6f7c8c">
                        <path d="M2 4H11M2 8H11M4 2 2 4M9 10 11 8M4 4V10"/><path stroke="#c86a78" d="M16 2h8v8h-8zM20 2v8M16 6h8"/><path stroke-width="2" d="M35 4Q41 0 41 5L37 10"/>
                        <path stroke="#a08890" stroke-width="3" d="M68 3 74 8M82 3 88 8"/><path d="M100 10 103 2M111 10 117 4M114 2h4v4M125 10 130 5M129 2h4v4h-4zM139 10 145 4M141 3h5v5"/>
                        <path stroke="#a4aeb8" d="M166 3h6v6h-6zM179 4h7M179 8h7M197 3l6 6M203 3l-6 6"/><path stroke="#f4f6f8" stroke-width="2" d="M211 3h7v6h-7zM224 3h7v6h-7z"/>
                        <path stroke="#9098a8" d="M239 8 244 3h4l-4 6zM252 9 258 3M256 9l5-6"/>
                    </g>
                    <path fill="#7a9ac0" d="M266 6l5-3 4 2-5 4zM281 5l4-2 3 3-3 2z"/>
                    <path fill="#8a96c8" d="M300 3h6l2 4-4 3-5-3z"/>
                    <g fill="#e6c4cc" stroke="#cc6a74"><path d="M314 4l2-2h6v6l-2 2h-6z"/><path d="M327 4l2-2h6v6l-2 2h-6zM327 6h7"/><path d="M341 4l2-2h6v6l-2 2h-6zM345 3v7"/><path d="M355 4l2-2h6v6l-2 2h-6z"/><path d="M370 4l2-2h6v6l-2 2h-6z"/></g>
                    <path fill="#6f98cc" d="M388 2h8l-3 4v5h-2V6z"/>
                </svg>
            </div>
        </div>

        <aside class="dock">
            <button>Konstruktionen</button>
            <button>Visuelle Effekte</button>
            <button>Blech-Kostenkalkulation</button>
            <button>Bauwesen-Funktionen</button>
        </aside>
    </main>

    <div class="bottom">
        <div class="command"><input type="text" aria-label="Eingabe" value="Funktion/ Objekt auswählen (RMT=weitere Auswahl)"></div>
        <div class="tools">
            <span class="grip"></span>
            <button class="t drop wide" aria-label="Fläche"><svg viewBox="0 0 18 14"><path fill="#f4f4f4" stroke="#333" d="M1 11 5 3 17 2 13 11z"/></svg></button>
            <span class="vsep"></span>
            <button class="t drop wide" aria-label="Farbe"><span class="swatch"></span></button>
            <select class="ltype" aria-label="Linienart"><option></option></select>
            <select class="lwidth" aria-label="Linienstärke"><option>1</option></select>
            <button class="t" aria-label="Pinsel"><svg viewBox="0 0 14 14"><path stroke="#333" stroke-width="1.500" fill="none" d="M2 4H7M4 11 11 3M9 9 13 5"/></svg></button>
            <span class="grip"></span>
            <button class="t drop" aria-label="Stern"><svg viewBox="0 0 14 14"><path stroke="#b06a5a" fill="none" d="M3 12 7 6 11 12M3 6H11M7 3V6M5 9H9"/></svg></button>
            <button class="t drop red1" aria-label="Maß"><svg viewBox="0 0 14 14"><use href="#d-arch"/></svg></button>
            <button class="t drop red1" aria-label="Kettenmaß"><svg viewBox="0 0 14 14"><use href="#d-comb"/></svg></button>
            <button class="t drop" aria-label="Stufenmaß"><svg viewBox="0 0 14 14"><use href="#d-step"/></svg></button>
            <button class="t drop" aria-label="Bezugsmaß"><svg viewBox="0 0 14 14"><use href="#d-chain"/></svg></button>
            <button class="t drop" aria-label="Koordinatenmaß"><svg viewBox="0 0 14 14"><use href="#d-flow"/></svg></button>
            <span class="vsep"></span>
            <button class="t drop" aria-label="Maß 3D"><svg viewBox="0 0 14 14"><use href="#d-arch"/></svg></button>
            <button class="t" aria-label="Kette 3D"><svg viewBox="0 0 14 14"><use href="#d-comb"/></svg></button>
            <button class="t" aria-label="Stufe 3D"><svg viewBox="0 0 14 14"><use href="#d-step"/></svg></button>
            <button class="t drop" aria-label="Bezug 3D"><svg viewBox="0 0 14 14"><use href="#d-chain"/></svg></button>
            <button class="t drop" aria-label="Koordinaten 3D"><svg viewBox="0 0 14 14"><use href="#d-flow"/></svg></button>
            <span class="vsep"></span>
            <button class="t drop" aria-label="Kontur"><svg viewBox="0 0 14 14"><use href="#d-house"/></svg></button>
            <button class="t" aria-label="Dreieck 1"><svg viewBox="0 0 14 14"><use href="#d-tri"/></svg></button>
            <button class="t" aria-label="Dreieck 2"><svg viewBox="0 0 14 14"><use href="#d-tri"/></svg></button>
            <button class="t" aria-label="Dreieck 3"><svg viewBox="0 0 14 14"><use href="#d-tri"/></svg></button>
            <span class="vsep"></span>
            <button class="t drop" aria-label="Durchmesser"><svg viewBox="0 0 14 14"><use href="#d-circ"/></svg></button>
            <button class="t drop" aria-label="Bogenmaß"><svg viewBox="0 0 14 14"><use href="#d-bow"/></svg></button>
            <button class="t drop" aria-label="Radius"><svg viewBox="0 0 14 14"><use href="#d-rad"/></svg></button>
            <span class="vsep"></span>
            <button class="t drop" aria-label="Winkel"><svg viewBox="0 0 14 14"><use href="#d-fan"/></svg></button>
            <span class="vsep"></span>
            <button class="t red1" aria-label="Winkel 1"><svg viewBox="0 0 14 14"><use href="#d-fan"/></svg></button>
            <button class="t" aria-label="Winkel 2"><svg viewBox="0 0 14 14"><use href="#d-fan"/></svg></button>
            <button class="t red1" aria-label="Winkel 3"><svg viewBox="0 0 14 14"><use href="#d-fan"/></svg></button>
            <span class="grip big"></span>
            <button class="t" aria-label="Kreuz"><svg viewBox="0 0 14 14"><use href="#d-cross"/></svg></button>
            <button class="t" aria-label="Schräge"><svg viewBox="0 0 14 14"><use href="#d-slash"/></svg></button>
            <button class="t" aria-label="Linie"><svg viewBox="0 0 14 14"><use href="#d-slash"/></svg></button>
            <span class="vsep"></span>
            <button class="t drop" aria-label="Höhe"><svg viewBox="0 0 14 14"><use href="#d-level"/></svg></button>
            <button class="t drop" aria-label="Schweißnaht"><svg viewBox="0 0 14 14"><use href="#d-weld"/></svg></button>
            <button class="t drop" aria-label="Positionsfahne"><svg viewBox="0 0 14 14"><use href="#d-flag"/></svg></button>
            <span class="vsep"></span>
            <button class="t drop" aria-label="Spanne"><svg viewBox="0 0 14 14"><use href="#d-span"/><path fill="#c22a2a" d="M5 2h5v3H5z"/></svg></button>
            <button class="t drop" aria-label="Warnung"><svg viewBox="0 0 14 14"><path stroke="#c22a2a" fill="none" d="M1 3V11M13 3V11M1 6H13"/><path fill="#f0a020" d="M4 13 8 7 12 13z"/></svg></button>
            <span class="vsep"></span>
            <button class="t drop" aria-label="Zahl"><svg viewBox="0 0 14 14"><path fill="#fff" stroke="#8890a8" d="M.5 1.500h13v11H.5z"/><path fill="#3a6fc0" d="M1 2h12v2H1z"/><path stroke="#222" fill="none" d="M3 6V8H6M5 6V11M8 6H10V8L8 10H11"/></svg></button>
            <button class="t drop" aria-label="Einstellung"><svg viewBox="0 0 14 14"><use href="#d-span"/><path fill="#fff" stroke="#999" d="M6 6h5v7H6z"/></svg></button>
            <button class="t drop" aria-label="Magnet"><svg viewBox="0 0 14 14"><path stroke="#2d8ac8" stroke-width="1.500" d="M1 1V8M13 1V8M5 1V5M9 1V5"/><path fill="none" stroke="#d8402a" stroke-width="3" d="M4 5V8Q7 14 10 8V5"/></svg></button>
        </div>
    </div>

    <footer class="status">
        <span>Teil : 434358269</span><span>Ansicht : Ansicht 1 1:10</span><span>Maßstab : 1:10</span><span class="pos">(X=1461.405, Y=2698.862, Z=-998.218)</span>
    </footer>
</div>
<div class="taskbar"><i></i><i></i><i></i><i></i><i></i><i></i><i></i><i></i><i></i><i></i><time>10:44</time></div>

<script src="model.js"></script>
</body>
</html>
```

FILE: styles.css
```css
* {
    box-sizing: border-box;
}
body {
    margin: 0;
    height: 100vh;
    display: flex;
    flex-direction: column;
    overflow: hidden;
    background: #0a63cc;
    font-family: Roboto, "Open Sans", sans-serif;
    font-size: 7px;
    line-height: 10px;
    color: #1a1a1a;
}
button, input, select {
    font: inherit;
    color: inherit;
    border: 0;
    padding: 0;
    margin: 0;
    background: none;
    border-radius: 0;
}
h1, h2, h3, ul {
    margin: 0;
    padding: 0;
    font-size: inherit;
    font-weight: normal;
}
svg {
    display: block;
    flex: none;
}
.defs {
    position: absolute;
}
.red { --a: #f28a74; --b: #d8432e; --c: #a82e22; }
.blue { --a: #8fbfe8; --b: #4b8ccc; --c: #28609c; }
.grey { --a: #cfd6dc; --b: #98a8b4; --c: #6c7c8a; }
.window {
    flex: 1;
    min-height: 0;
    margin-right: 4px;
    display: flex;
    flex-direction: column;
    background: #505050;
}

/* title bar */
.titlebar {
    position: relative;
    height: 13px;
    flex: none;
    display: flex;
    background:
        radial-gradient(circle at 172px 12px, #c65a98 0, transparent 14px),
        radial-gradient(circle at 304px 12px, #b85a9c 0, transparent 15px),
        radial-gradient(circle at 373px 12px, #b85a9c 0, transparent 15px),
        linear-gradient(90deg, #7faad0 0, #4a8cc8 80px, #1f66c0 200px, #1c60bc 60%, #1a55a8 85%, #2b6cb8 92%, #1c62b4 100%);
}
.logo {
    position: absolute;
    left: 0;
    top: 1px;
    z-index: 2;
}
.logo svg {
    width: 22px;
    height: 22px;
}
.quick {
    width: 170px;
    margin-left: 27px;
}
.quick svg {
    width: 170px;
    height: 12px;
}
.title {
    flex: 1;
    text-align: center;
    line-height: 13px;
    color: #0b1a30;
    text-shadow: 0 0 4px #a8c8ec, 0 0 4px #a8c8ec;
    white-space: nowrap;
}
.winbtns {
    display: flex;
    height: 9px;
    margin-right: 2px;
}
.winbtns button {
    width: 16px;
    background: linear-gradient(#b8cadf, #6a88ac);
    border: 1px solid #38506c;
    border-top: 0;
}
.winbtns svg {
    width: 100%;
    height: 8px;
}
.winbtns .x {
    width: 28px;
    background: linear-gradient(#e0907c, #b8301c);
}

/* ribbon */
.tabs {
    height: 13px;
    flex: none;
    display: flex;
    padding-left: 26px;
    color: #ececec;
}
.tabs button {
    padding: 0 8px;
    margin-top: 1px;
    height: 12px;
    border: 1px solid transparent;
    border-width: 0 1px 0 0;
    white-space: nowrap;
}
.tabs .active {
    background: linear-gradient(#f8f8fa, #d8dae0);
    color: #111;
    border-radius: 2px 2px 0 0;
}
.tabhelp {
    width: 44px;
    height: 10px;
    margin: 1px 0 0 auto;
}
.ribbon {
    height: 52px;
    flex: none;
    display: flex;
    gap: 3px;
    padding-top: 1px;
    background: linear-gradient(#cfd0d8 0, #c2c4ce 16%, #b7bac5 22%, #c8cad2 45%, #e2e4e8 80%, #e8efef 100%);
}
.group {
    display: flex;
    flex-direction: column;
    margin-bottom: 1px;
    border: 1px solid #dfe1e6;
    border-right-color: #9a9ca4;
    border-radius: 2px;
    background: linear-gradient(#d6d8df 0, #c4c7d0 22%, #d2d4db 45%, #ebedf0 100%);
}
.group:first-child {
    border-left: 0;
}
.items {
    display: flex;
    flex: 1;
    padding: 0 1px;
}
.items button {
    width: 25px;
    display: flex;
    flex-direction: column;
    align-items: center;
    white-space: nowrap;
    padding-top: 2px;
}
.items button svg {
    width: 20px;
    height: 20px;
}
.items .w26 { width: 26px; }
.items .w27 { width: 27px; }
.items .w30 { width: 30px; }
.items .w34 { width: 34px; }
.items .off {
    color: #a0a2a8;
}
.items .off svg {
    opacity: .3;
}
.items .drop::after {
    content: "";
    border: 1px solid transparent;
    border-top: 2px solid #444;
    margin-top: 1px;
}
.group h2 {
    height: 9px;
    line-height: 9px;
    text-align: center;
    color: #f6f6f6;
    background: linear-gradient(#b4b8b8, #989c9a);
}
.vsep {
    width: 1px;
    margin: 3px 2px;
    background: #a0a3aa;
    flex: none;
}
.items .vsep {
    margin: 3px 0;
}

/* work area */
.work {
    flex: 1;
    min-height: 0;
    display: flex;
    padding-top: 3px;
}
.side {
    width: 284px;
    flex: none;
    display: flex;
    flex-direction: column;
}
.panel {
    display: flex;
    flex-direction: column;
    min-height: 0;
}
.views { flex: 295 1 0; }
.parts { flex: 203 1 0; }
.features { flex: 197 1 0; }
.panel h3 {
    display: flex;
    align-items: center;
    gap: 3px;
    height: 11px;
    flex: none;
    padding-right: 3px;
    background: #9f9f9f;
    color: #505050;
}
.panel h3 svg {
    width: 6px;
    height: 6px;
}
.panel h3 svg:first-of-type {
    margin-left: auto;
}
.minibar {
    display: flex;
    align-items: center;
    gap: 3px;
    height: 17px;
    flex: none;
    padding-left: 6px;
    margin-right: 2px;
    border: 1px solid #d0d0d0;
    border-width: 2px 0 0 1px;
    background: linear-gradient(#d2d3d8, #a3a5b0);
}
.minibar button, .minibar svg {
    width: 10px;
    height: 10px;
}
.minibar .num {
    font-weight: bold;
    font-size: 8px;
}
.minibar .vsep {
    height: 10px;
    margin: 0;
}
.body {
    flex: 1;
    min-height: 0;
    display: flex;
    margin-left: 1px;
    background: #fff;
}
.tree {
    flex: 1;
    list-style: none;
    overflow: hidden;
}
.parts .tree {
    padding-top: 1px;
    font-family: Lato, Roboto, sans-serif;
}
.features .tree {
    padding-top: 2px;
}
.tree li {
    display: flex;
    align-items: center;
    height: 10px;
    padding-left: 2px;
    white-space: nowrap;
}
.tree li:nth-child(odd) {
    height: 11px;
}
.tree svg {
    width: 9px;
    height: 9px;
    margin-right: 3px;
}
.tree .dot {
    width: 6px;
    height: 6px;
    margin: 0 1px 0 -1px;
    flex: none;
}
.tree .sub {
    margin-left: 16px;
    padding-left: 5px;
    border-left: 1px dotted #aaa;
    background: linear-gradient(#bbb, #bbb) 0 5px / 5px 1px no-repeat;
}
.tree .top {
    margin-left: 5px;
    padding-left: 5px;
    border-left: 1px dotted #aaa;
    background: linear-gradient(#bbb, #bbb) 0 5px / 5px 1px no-repeat;
}
.tree .here {
    padding-left: 14px;
}
.tree .here svg {
    width: 11px;
}
.tree a {
    color: #c8202c;
}
.dim {
    color: #b4b4b4;
}
.picked {
    color: #c8202c;
    outline: 1px solid #8a8a8a;
    line-height: 9px;
}
.exp {
    width: 6px;
    height: 6px;
    border: 1px solid #777;
    line-height: 4px;
    margin-right: 3px;
    flex: none;
    background: #fff;
}
.bold {
    font-weight: bold;
}
.bold .exp {
    width: 7px;
    height: 7px;
    margin: 0 5px 0 1px;
    line-height: 5px;
}
.bold svg {
    margin-right: 4px;
}
.tree .here svg {
    margin-right: 3px;
}
.scroll {
    width: 10px;
    margin-right: 4px;
    display: flex;
    flex-direction: column;
    align-items: center;
    background: #eee;
}
.scroll i {
    border: 2px solid transparent;
    flex: none;
}
.scroll .up {
    border-top: 0;
    border-bottom: 3px solid #555;
    margin: 4px 0;
}
.scroll .down {
    border-bottom: 0;
    border-top: 3px solid #555;
    margin: 4px 0;
}
.track {
    flex: 1;
    width: 9px;
}
.thumb {
    display: block;
    height: 45%;
    border: 1px solid #a4a4a4;
    border-radius: 1px;
    background: linear-gradient(#888, #888) 50% 48% / 4px 1px no-repeat, linear-gradient(#888, #888) 50% 51% / 4px 1px no-repeat, linear-gradient(90deg, #f4f4f4, #c8c8cc);
}
.parts .track {
    padding-top: 83px;
}
.parts .thumb {
    height: 29px;
}
.ptabs {
    display: flex;
    height: 18px;
    flex: none;
    padding-top: 3px;
    color: #ececec;
}
.features .ptabs {
    height: 14px;
    padding-top: 2px;
}
.ptabs button {
    height: 12px;
    padding: 0 3px 0 2px;
    margin-right: 2px;
    white-space: nowrap;
}
.ptabs .active {
    background: #f2f2f4;
    color: #111;
}

/* drawing area */
.viewport {
    position: relative;
    flex: 1;
    min-width: 0;
    margin: 1px 2px 0 4px;
    border-right: 1px solid #fff;
    background: linear-gradient(#c8dcea 0, #d3e3f0 17%, #dae6f3 30%, #e3edf5 48%, #eef5fc 70%, #fff 95%);
}
.model {
    width: 100%;
    height: 100%;
}
.frame {
    fill: none;
    stroke: #e060e0;
    stroke-dasharray: 2 2;
}
.edge {
    stroke: #222;
    stroke-width: 1;
    stroke-linejoin: round;
}
.rings {
    fill: none;
    stroke: #222;
    stroke-width: .8;
}
.axis {
    font: italic 14px "Open Sans", sans-serif;
}
.world {
    font: bold 9px Roboto, sans-serif;
    fill: #c0923a;
}
.floatbar {
    position: absolute;
    left: 393px;
    top: 11px;
    opacity: .45;
}
.floatbar svg {
    width: 400px;
    height: 12px;
}
.dock {
    width: 10px;
    flex: none;
    display: flex;
    flex-direction: column;
    align-items: stretch;
    gap: 9px;
    padding-top: 1px;
    margin-right: 1px;
}
.dock button {
    writing-mode: vertical-rl;
    padding: 2px 0 15px;
    text-align: left;
    font-family: "Liberation Sans", sans-serif;
    color: #94834a;
    background: #fbe9a4;
    white-space: nowrap;
}

/* bottom bars */
.bottom {
    display: flex;
    height: 19px;
    flex: none;
    margin-top: 1px;
}
.command {
    width: 296px;
    flex: none;
    padding: 4px 2px 4px 5px;
    background: linear-gradient(#d4d5da, #b0b2ba);
}
.command input {
    display: block;
    width: 100%;
    height: 11px;
    padding: 0 2px;
    background: #fff;
}
.tools {
    display: flex;
    align-items: center;
    padding-left: 2px;
    background: linear-gradient(#d4d5da, #a9abb5);
}
.grip {
    width: 5px;
    height: 13px;
    border-left: 1px dotted #555;
    flex: none;
}
.grip.big {
    width: 7px;
    margin-left: 2px;
}
.tools .vsep {
    height: 13px;
}
.t {
    display: flex;
    align-items: center;
    width: 16px;
    flex: none;
    --d: #666;
}
.t svg {
    width: 14px;
    height: 14px;
}
.red1 {
    --d: #c22a2a;
}
.t.drop {
    width: 24px;
}
.t.drop::after {
    content: "";
    border: 1px solid transparent;
    border-top: 2px solid #555;
    margin-left: 4px;
}
.t.wide {
    width: 31px;
    gap: 3px;
}
.t.wide svg {
    width: 18px;
    height: 14px;
    margin-left: 1px;
}
.swatch {
    width: 16px;
    height: 11px;
    margin-left: 2px;
    background: #000;
}
.ltype, .lwidth {
    appearance: none;
    height: 11px;
    line-height: 11px;
    flex: none;
    padding: 0 10px 0 2px;
    margin-right: 2px;
    background:
        conic-gradient(from 315deg at 50% 100%, #444 90deg, transparent 0) calc(100% - 3px) 5px / 4px 2px no-repeat,
        linear-gradient(#c6c6cc, #c6c6cc) 100% 0 / 9px 100% no-repeat,
        #fff;
}
.ltype {
    width: 86px;
    background:
        conic-gradient(from 315deg at 50% 100%, #444 90deg, transparent 0) calc(100% - 3px) 5px / 4px 2px no-repeat,
        linear-gradient(#c6c6cc, #c6c6cc) 100% 0 / 9px 100% no-repeat,
        linear-gradient(#999, #999) 5px 50% / 68px 1px no-repeat,
        #fff;
}
.lwidth {
    width: 28px;
}
.status {
    height: 10px;
    flex: none;
    display: flex;
    gap: 6px;
    padding-left: 3px;
    line-height: 12px;
    color: #e4e4e4;
    white-space: nowrap;
    background: linear-gradient(#4a4b50, #303338);
}
.status .pos {
    margin-left: 3px;
}
.taskbar {
    height: 4px;
    flex: none;
    display: flex;
    gap: 18px;
    padding-left: 147px;
    overflow: hidden;
    background: linear-gradient(90deg, #1a9ac8 0, #1a8cc8 30%, #1f78c8 42%, #1a66b8 70%, #1256a4 100%);
}
.taskbar i {
    width: 18px;
    background: #c8284c;
}
.taskbar i:nth-child(2), .taskbar i:nth-child(8) { background: #e8d040; }
.taskbar i:nth-child(4), .taskbar i:nth-child(6) { background: #1a4a9c; }
.taskbar i:nth-child(5), .taskbar i:nth-child(7) { background: #b8dcec; }
.taskbar i:nth-child(9) { background: #d02a6c; }
.taskbar time {
    margin: 0 28px 0 auto;
    line-height: 8px;
    color: #e8f0f8;
}
```

FILE: model.js
```js
// facet lines between two elliptic rims
function facets(id, top, bottom, from, to, step) {
    let d = '';
    for (let a = from; a <= to; a += step) {
        const c = Math.cos(a * Math.PI / 180);
        const s = Math.sin(a * Math.PI / 180);
        d += 'M' + (top.x + top.rx * c) + ' ' + (top.y + top.ry * s);
        d += 'L' + (bottom.x + bottom.rx * c) + ' ' + (bottom.y + bottom.ry * s);
    }
    document.getElementById(id).setAttribute('d', d);
}
facets('cone', {x: 954, y: 167, rx: 58, ry: 29}, {x: 943.5, y: 211, rx: 73, ry: 37}, 0, 190, 5);
facets('reducer', {x: 950, y: 425, rx: 52, ry: 22}, {x: 946, y: 436, rx: 45, ry: 17}, 35, 145, 6);

// bolt holes round the open flange
function bolts(x1, y1, x2, y2, n) {
    let d = '';
    for (let i = 0; i <= n; i++) {
        const x = x1 + (x2 - x1) * i / n;
        const y = y1 + (y2 - y1) * i / n;
        d += 'M' + (x - 0.7) + ' ' + (y - 0.7) + 'h1.4v1.4h-1.4z';
    }
    return d;
}
document.getElementById('bolts').setAttribute('d',
    bolts(477, 492, 619, 546, 15) + bolts(477, 553, 619, 608, 15) +
    bolts(476.5, 500, 476.5, 546, 5) + bolts(619, 554, 619, 600, 5));
```
